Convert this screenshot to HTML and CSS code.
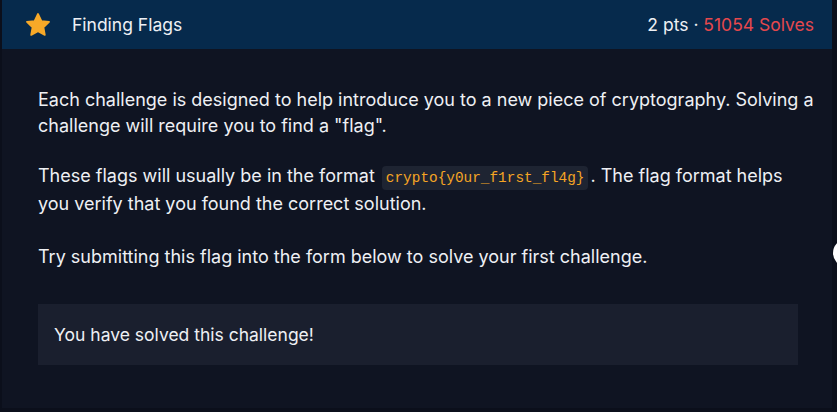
FILE: index.html
```html
<!DOCTYPE html>
<html>
<head>
<meta charset="utf-8">
<link rel="stylesheet" href="styles.css">
</head>
<body>
<div class="page">
  <section class="card">
    <header class="card-head">
      <div class="title">
        <svg class="star" width="26" height="26" viewBox="0 0 24 24"><path d="M12 1.8l3.1 6.5 7.1.9-5.2 4.9 1.3 7.1L12 17.8l-6.3 3.4 1.3-7.1-5.2-4.9 7.1-.9z" fill="#f7a928" stroke="#f7a928" stroke-width="1.6" stroke-linejoin="round"/></svg>
        <span class="name">Finding Flags</span>
      </div>
      <div class="meta">2 pts · <span class="solves">51054 Solves</span></div>
    </header>
    <div class="card-body">
      <p>Each challenge is designed to help introduce you to a new piece of cryptography. Solving a challenge will require you to find a "flag".</p>
      <p>These flags will usually be in the format <code>crypto{y0ur_f1rst_fl4g}</code>. The flag format helps you verify that you found the correct solution.</p>
      <p class="last">Try submitting this flag into the form below to solve your first challenge.</p>
      <div class="solved">You have solved this challenge!</div>
    </div>
  </section>
  <div class="knob"></div>
</div>
</body>
</html>
```
FILE: styles.css
```css
html, body {
  margin: 0;
  padding: 0;
  background: #0b0f1b;
  font-family: Inter, "Noto Sans", sans-serif;
  color: #eef0f4;
}
.page {
  position: relative;
  width: 837px;
  height: 412px;
  overflow: hidden;
}
.card {
  margin-left: 2px;
  width: 830px;
  height: 408px;
  background: #0f1422;
}
.card-head {
  height: 49px;
  background: #062a4c;
  display: flex;
  align-items: center;
  justify-content: space-between;
  padding: 0 18px 0 23px;
}
.title {
  display: flex;
  align-items: center;
}
.star {
  display: block;
}
.name {
  margin-left: 21px;
  font-size: 17.5px;
  color: #eef0f4;
}
.meta {
  font-size: 17.5px;
  color: #eef0f4;
}
.solves {
  color: #e5484d;
}
.card-body {
  padding: 38px 16px 0 36px;
}
.card-body p {
  margin: 0 0 24px;
  font-size: 18px;
  line-height: 26px;
}
.card-body p.last {
  margin-top: 27px;
}
code {
  font-family: "Liberation Mono", "DejaVu Sans Mono", monospace;
  font-size: 14.4px;
  color: #f5a524;
  background: #1e2432;
  padding: 4px 4px;
  margin: 0 2px;
  border-radius: 4px;
}
.solved {
  margin-top: 34px;
  width: 760px;
  height: 61px;
  box-sizing: border-box;
  background: #1a1f2e;
  display: flex;
  align-items: center;
  padding-left: 16px;
  font-size: 17.5px;
}
.knob {
  position: absolute;
  left: 833px;
  top: 240px;
  width: 24px;
  height: 26px;
  border-radius: 50%;
  background: #ffffff;
}
```
